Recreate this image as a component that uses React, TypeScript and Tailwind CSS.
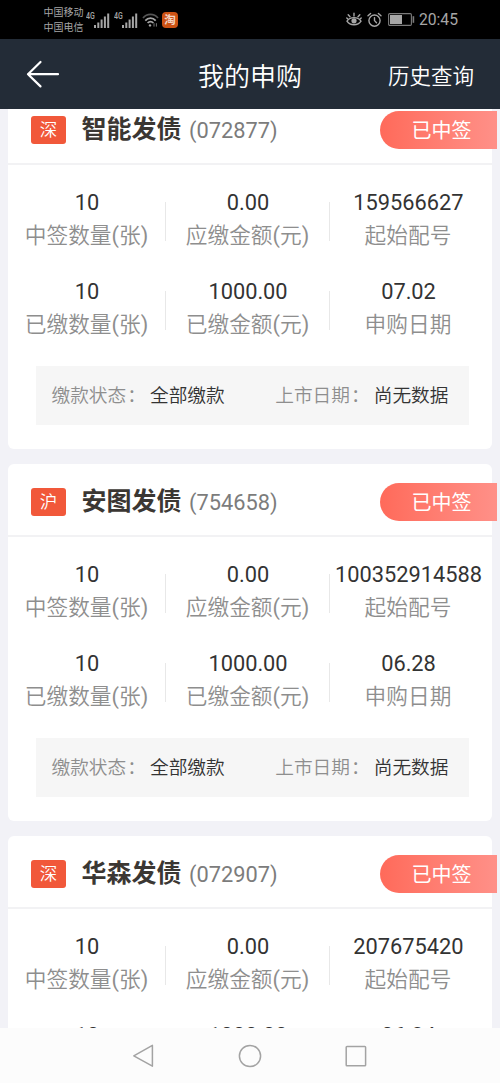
interface Subscription {
  market: string;
  name: string;
  code: string;
  startNo: string;
  date: string;
}

interface Field {
  value: string;
  label: string;
  unit?: string;
}

const subscriptions: Subscription[] = [
  { market: '深', name: '智能发债', code: '072877', startNo: '159566627', date: '07.02' },
  { market: '沪', name: '安图发债', code: '754658', startNo: '100352914588', date: '06.28' },
  { market: '深', name: '华森发债', code: '072907', startNo: '207675420', date: '06.24' },
];

function Signal() {
  return (
    <div className="relative h-[18px] w-[24px]">
      <span className="absolute -top-px left-0 origin-left scale-x-[0.78] text-[9px] leading-[12px] font-medium">4G</span>
      <svg className="absolute top-[2px] left-[8px]" width="16" height="15" viewBox="0 0 16 15" fill="#a6a6a6">
        <rect x="0" y="12" width="2" height="3" />
        <rect x="3.3" y="9.5" width="2" height="5.5" />
        <rect x="6.6" y="6.5" width="2" height="8.5" />
        <rect x="9.9" y="3.5" width="2" height="11.5" />
        <rect x="13.2" y="0.5" width="2" height="14.5" />
      </svg>
    </div>
  );
}

function StatusBar() {
  return (
    <div className="flex h-[39px] items-center bg-black pr-[42px] pl-[43.5px] text-[#a6a6a6]">
      <div className="w-[42.5px] pt-[2px] text-[10px] leading-[14.5px]">
        <div>中国移动</div>
        <div>中国电信</div>
      </div>
      <div className="flex gap-[4px]">
        <Signal />
        <Signal />
      </div>
      <svg className="ml-[4px]" width="17" height="16" viewBox="0 0 17 16" fill="none" stroke="#a6a6a6" strokeWidth="1.7">
        <path d="M1 6 C5 1.2 12 1.2 16 6" stroke="#555" />
        <path d="M3.3 8.6 C6.2 5.2 10.8 5.2 13.7 8.6" />
        <path d="M5.6 11 C7.3 9.2 9.7 9.2 11.4 11" />
        <circle cx="8" cy="13.4" r="1.2" fill="#a6a6a6" stroke="none" />
        <path d="M12 11.2v3.4M14.4 11.2v3.4" strokeWidth="1" stroke="#777" />
      </svg>
      <div className="ml-[3px] flex h-[16px] w-[16px] items-center justify-center rounded-[4px] bg-[#cc5214] pt-[2px] text-[11.5px] leading-none font-bold text-[#f3d5c5]">
        淘
      </div>
      <div className="ml-auto flex items-center">
        <svg width="16" height="15" viewBox="0 0 16 15" fill="none" stroke="#a6a6a6" strokeWidth="1.4" strokeLinecap="round">
          <path d="M1 9.2 C4.2 4.4 11.8 4.4 15 9.2 C11.8 14 4.2 14 1 9.2Z" />
          <circle cx="8" cy="8.8" r="2.6" fill="#a6a6a6" stroke="none" />
          <path d="M8 4V1.2M4 4.8 2.2 2.8M12 4.8l1.8-2M1.9 7 .8 6M14.1 7l1.1-1" />
        </svg>
        <svg className="ml-[4.5px]" width="15" height="16" viewBox="0 0 15 16" fill="none" stroke="#a6a6a6" strokeWidth="1.4" strokeLinecap="round">
          <circle cx="7.5" cy="8.6" r="5.6" />
          <path d="M7.5 5.6v3l2 2.2M1 3.8 3.6 1.4M14 3.8l-2.6-2.4" />
        </svg>
        <svg className="ml-[6px]" width="27" height="13" viewBox="0 0 27 13" fill="none">
          <rect x=".6" y=".6" width="22.8" height="11.8" rx="1.2" stroke="#7a7a7a" strokeWidth="1.1" />
          <rect x="2" y="2" width="12" height="9" fill="#a6a6a6" />
          <rect x="24.6" y="3.2" width="1.6" height="6.6" fill="#7a7a7a" />
        </svg>
        <span className="ml-[4px] pt-px text-[15.7px] leading-[20px]">20:45</span>
      </div>
    </div>
  );
}

function Header() {
  return (
    <header className="grid h-[70px] grid-cols-[1fr_auto_1fr] items-center bg-[#232c37] pr-[26px] pl-[26px] text-white">
      <svg width="34" height="28" viewBox="0 0 34 28" fill="none" stroke="#fff" strokeWidth="2.2" strokeLinecap="round" strokeLinejoin="round">
        <path d="M32 14.2H2M14.5 2 2 14.2 14.5 26.4" />
      </svg>
      <h1 className="pt-[5px] text-[26px] leading-[36px] font-[350]">我的申购</h1>
      <button className="justify-self-end pt-[5px] text-[21.5px] leading-[32px] font-[350]">历史查询</button>
    </header>
  );
}

function FieldRow({ fields }: { fields: Field[] }) {
  return (
    <div className="grid h-[66px] grid-cols-[158px_164px_157px]">
      {fields.map((field, i) => (
        <div key={field.label} className="relative text-center text-[21.8px] leading-[33px] whitespace-nowrap">
          <div className="text-[#333]">{field.value}</div>
          <div className="-ml-px text-[21.7px] font-[350] text-[#8e8e8e]">
            {field.label}
            {field.unit && (
              <>
                <span className="font-normal">(</span>
                {field.unit}
                <span className="font-normal">)</span>
              </>
            )}
          </div>
          {i < 2 && <span className="absolute top-[16px] right-0 h-[39px] w-px bg-[#e8e8e8]" />}
        </div>
      ))}
    </div>
  );
}

function StatusItem({ label, value }: { label: string; value: string }) {
  return (
    <div className="flex">
      <span className="w-[98.5px] font-[350] text-[#8e8e8e]">
        {label}
        <span className="ml-px">：</span>
      </span>
      <span className="font-[350]">{value}</span>
    </div>
  );
}

function SubscriptionCard({ item }: { item: Subscription }) {
  return (
    <article className="h-[357px] shrink-0 rounded-[6px] bg-white">
      <div className="relative flex h-[73px] items-center border-b-2 border-[#f2f2f4] pl-[23px]">
        <span className="mt-[4px] flex h-[28px] w-[35px] items-center justify-center rounded-[3px] bg-[#f1583a] pt-[3px] text-[17.5px] leading-none font-[350] text-white">
          {item.market}
        </span>
        <h2 className="mt-[5px] ml-[15.5px] text-[25px] leading-[36px] font-bold text-[#3b3733]">{item.name}</h2>
        <span className="mt-[7px] ml-[7.5px] text-[21.8px] leading-[32px] text-[#7c7c7c]">({item.code})</span>
        <span className="absolute top-[19px] -right-[5px] h-[38px] w-[117px] rounded-l-full bg-linear-to-r from-[#ff6a5a] to-[#ff9088] pl-[31.5px] text-[20px] leading-[41px] text-white">
          已中签
        </span>
      </div>
      <div className="flex flex-col gap-[23px] pt-[21px]">
        <FieldRow
          fields={[
            { value: '10', label: '中签数量', unit: '张' },
            { value: '0.00', label: '应缴金额', unit: '元' },
            { value: item.startNo, label: '起始配号' },
          ]}
        />
        <FieldRow
          fields={[
            { value: '10', label: '已缴数量', unit: '张' },
            { value: '1000.00', label: '已缴金额', unit: '元' },
            { value: item.date, label: '申购日期' },
          ]}
        />
      </div>
      <div className="mt-[25px] ml-[28px] flex h-[59px] w-[433px] items-center justify-between bg-[#f6f6f6] pt-px pr-[20.5px] pl-[15.5px] text-[18.7px] leading-[30px] whitespace-nowrap text-[#333]">
        <StatusItem label="缴款状态" value="全部缴款" />
        <StatusItem label="上市日期" value="尚无数据" />
      </div>
    </article>
  );
}

function NavBar() {
  return (
    <nav className="flex h-[55px] items-center justify-center gap-[82px] bg-[#fcfcfc]">
      <svg width="24" height="24" viewBox="0 0 24 24" fill="none" stroke="#a3a3a3" strokeWidth="1.5" strokeLinejoin="round">
        <path d="M20.4 1.4v20.8L1.8 11.8Z" />
      </svg>
      <svg width="24" height="24" viewBox="0 0 24 24" fill="none" stroke="#a3a3a3" strokeWidth="1.5">
        <circle cx="12" cy="12" r="10.6" />
      </svg>
      <svg width="24" height="24" viewBox="0 0 24 24" fill="none" stroke="#a3a3a3" strokeWidth="1.5">
        <rect x="2.2" y="2.4" width="19.4" height="19.4" rx=".8" />
      </svg>
    </nav>
  );
}

export default function App() {
  return (
    <div className="flex h-[1083px] w-[500px] flex-col overflow-hidden bg-[#f2f2f7] font-['Roboto','Noto_Sans_CJK_SC',sans-serif]">
      <StatusBar />
      <Header />
      {/* list is scrolled, so the first card starts under the header */}
      <main className="h-[919px] overflow-hidden px-[8px]">
        <div className="-mt-[17px] flex flex-col gap-[15px]">
          {subscriptions.map((item) => (
            <SubscriptionCard key={item.code} item={item} />
          ))}
        </div>
      </main>
      <NavBar />
    </div>
  );
}
